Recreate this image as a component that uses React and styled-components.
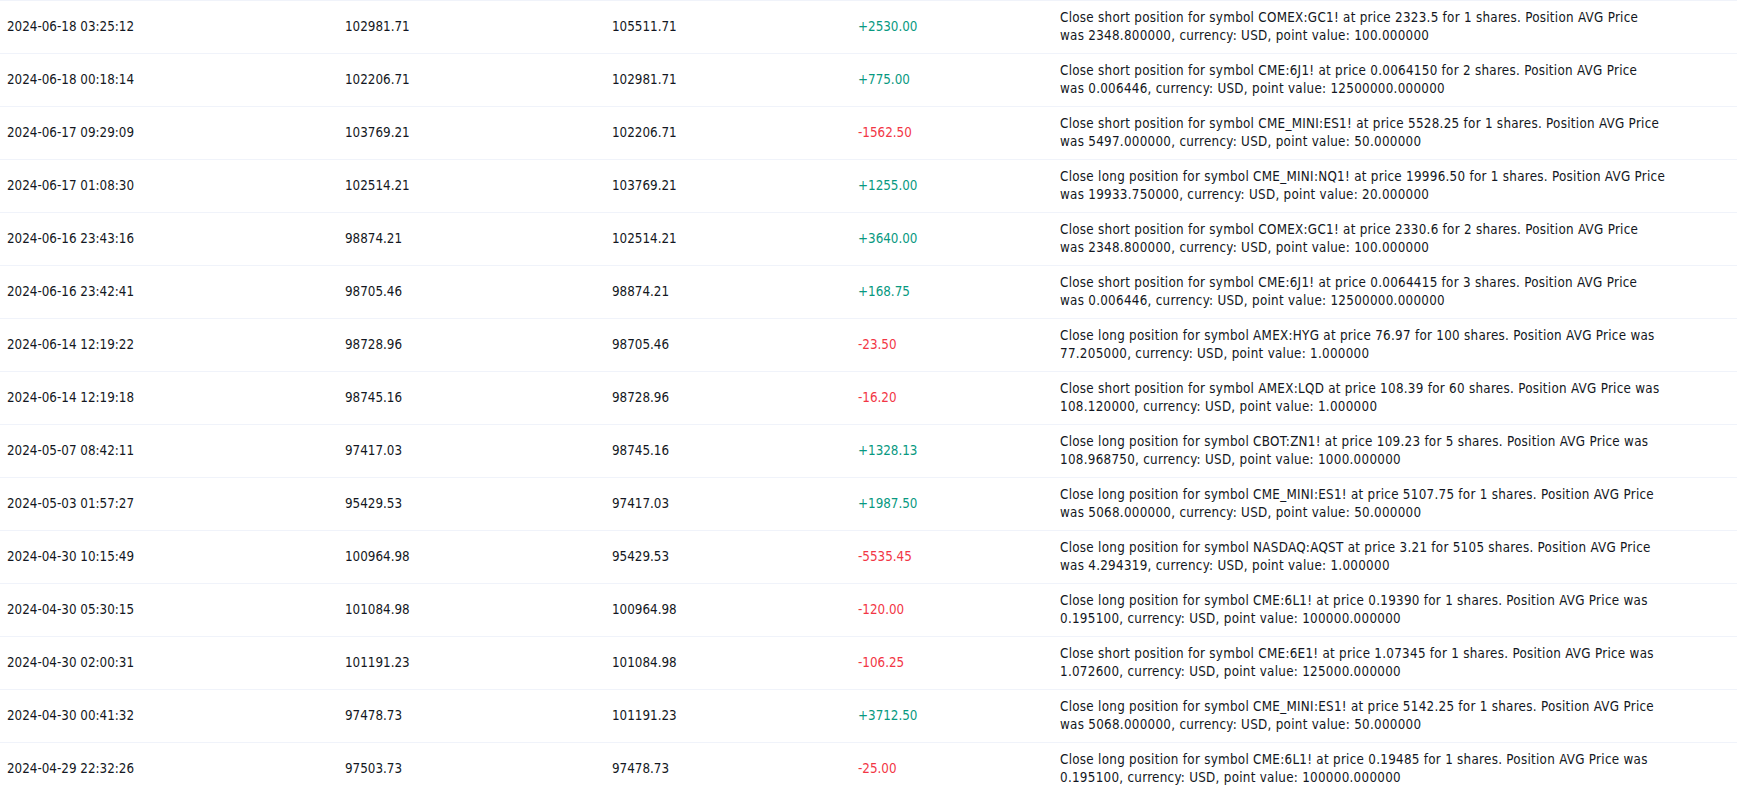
import styled, { createGlobalStyle } from "styled-components";

const GlobalStyle = createGlobalStyle`
  html, body {
    margin: 0;
    padding: 0;
    background: #ffffff;
    overflow: hidden;
  }
`;

const List = styled.div`
  width: 1737px;
  font-family: "DejaVu Sans Condensed", "DejaVu Sans", sans-serif;
  font-size: 13.3px;
  color: #131722;
`;

const Row = styled.div`
  display: grid;
  grid-template-columns: 338px 267px 246px 202px 1fr;
  align-items: center;
  height: 52px;
  border-top: 1px solid #f0f3fa;
`;

const Cell = styled.div`
  padding: 0 7px;
  line-height: 18px;
  white-space: nowrap;
`;

const ProfitCell = styled(Cell)`
  color: ${(p) => (p.$loss ? "#f23645" : "#089981")};
`;

const DescCell = styled(Cell)`
  white-space: pre-line;
  letter-spacing: 0.28px;
`;

const trades = [
  ["2024-06-18 03:25:12", "102981.71", "105511.71", "+2530.00", "Close short position for symbol COMEX:GC1! at price 2323.5 for 1 shares. Position AVG Price\nwas 2348.800000, currency: USD, point value: 100.000000"],
  ["2024-06-18 00:18:14", "102206.71", "102981.71", "+775.00", "Close short position for symbol CME:6J1! at price 0.0064150 for 2 shares. Position AVG Price\nwas 0.006446, currency: USD, point value: 12500000.000000"],
  ["2024-06-17 09:29:09", "103769.21", "102206.71", "-1562.50", "Close short position for symbol CME_MINI:ES1! at price 5528.25 for 1 shares. Position AVG Price\nwas 5497.000000, currency: USD, point value: 50.000000"],
  ["2024-06-17 01:08:30", "102514.21", "103769.21", "+1255.00", "Close long position for symbol CME_MINI:NQ1! at price 19996.50 for 1 shares. Position AVG Price\nwas 19933.750000, currency: USD, point value: 20.000000"],
  ["2024-06-16 23:43:16", "98874.21", "102514.21", "+3640.00", "Close short position for symbol COMEX:GC1! at price 2330.6 for 2 shares. Position AVG Price\nwas 2348.800000, currency: USD, point value: 100.000000"],
  ["2024-06-16 23:42:41", "98705.46", "98874.21", "+168.75", "Close short position for symbol CME:6J1! at price 0.0064415 for 3 shares. Position AVG Price\nwas 0.006446, currency: USD, point value: 12500000.000000"],
  ["2024-06-14 12:19:22", "98728.96", "98705.46", "-23.50", "Close long position for symbol AMEX:HYG at price 76.97 for 100 shares. Position AVG Price was\n77.205000, currency: USD, point value: 1.000000"],
  ["2024-06-14 12:19:18", "98745.16", "98728.96", "-16.20", "Close short position for symbol AMEX:LQD at price 108.39 for 60 shares. Position AVG Price was\n108.120000, currency: USD, point value: 1.000000"],
  ["2024-05-07 08:42:11", "97417.03", "98745.16", "+1328.13", "Close long position for symbol CBOT:ZN1! at price 109.23 for 5 shares. Position AVG Price was\n108.968750, currency: USD, point value: 1000.000000"],
  ["2024-05-03 01:57:27", "95429.53", "97417.03", "+1987.50", "Close long position for symbol CME_MINI:ES1! at price 5107.75 for 1 shares. Position AVG Price\nwas 5068.000000, currency: USD, point value: 50.000000"],
  ["2024-04-30 10:15:49", "100964.98", "95429.53", "-5535.45", "Close long position for symbol NASDAQ:AQST at price 3.21 for 5105 shares. Position AVG Price\nwas 4.294319, currency: USD, point value: 1.000000"],
  ["2024-04-30 05:30:15", "101084.98", "100964.98", "-120.00", "Close long position for symbol CME:6L1! at price 0.19390 for 1 shares. Position AVG Price was\n0.195100, currency: USD, point value: 100000.000000"],
  ["2024-04-30 02:00:31", "101191.23", "101084.98", "-106.25", "Close short position for symbol CME:6E1! at price 1.07345 for 1 shares. Position AVG Price was\n1.072600, currency: USD, point value: 125000.000000"],
  ["2024-04-30 00:41:32", "97478.73", "101191.23", "+3712.50", "Close long position for symbol CME_MINI:ES1! at price 5142.25 for 1 shares. Position AVG Price\nwas 5068.000000, currency: USD, point value: 50.000000"],
  ["2024-04-29 22:32:26", "97503.73", "97478.73", "-25.00", "Close long position for symbol CME:6L1! at price 0.19485 for 1 shares. Position AVG Price was\n0.195100, currency: USD, point value: 100000.000000"],
];

const App = () => {
  return (
    <>
      <GlobalStyle />
      <List>
        {trades.map(([time, before, after, profit, desc]) => (
          <Row key={time}>
            <Cell>{time}</Cell>
            <Cell>{before}</Cell>
            <Cell>{after}</Cell>
            <ProfitCell $loss={profit.startsWith("-")}>{profit}</ProfitCell>
            <DescCell>{desc}</DescCell>
          </Row>
        ))}
      </List>
    </>
  );
};

export default App;
